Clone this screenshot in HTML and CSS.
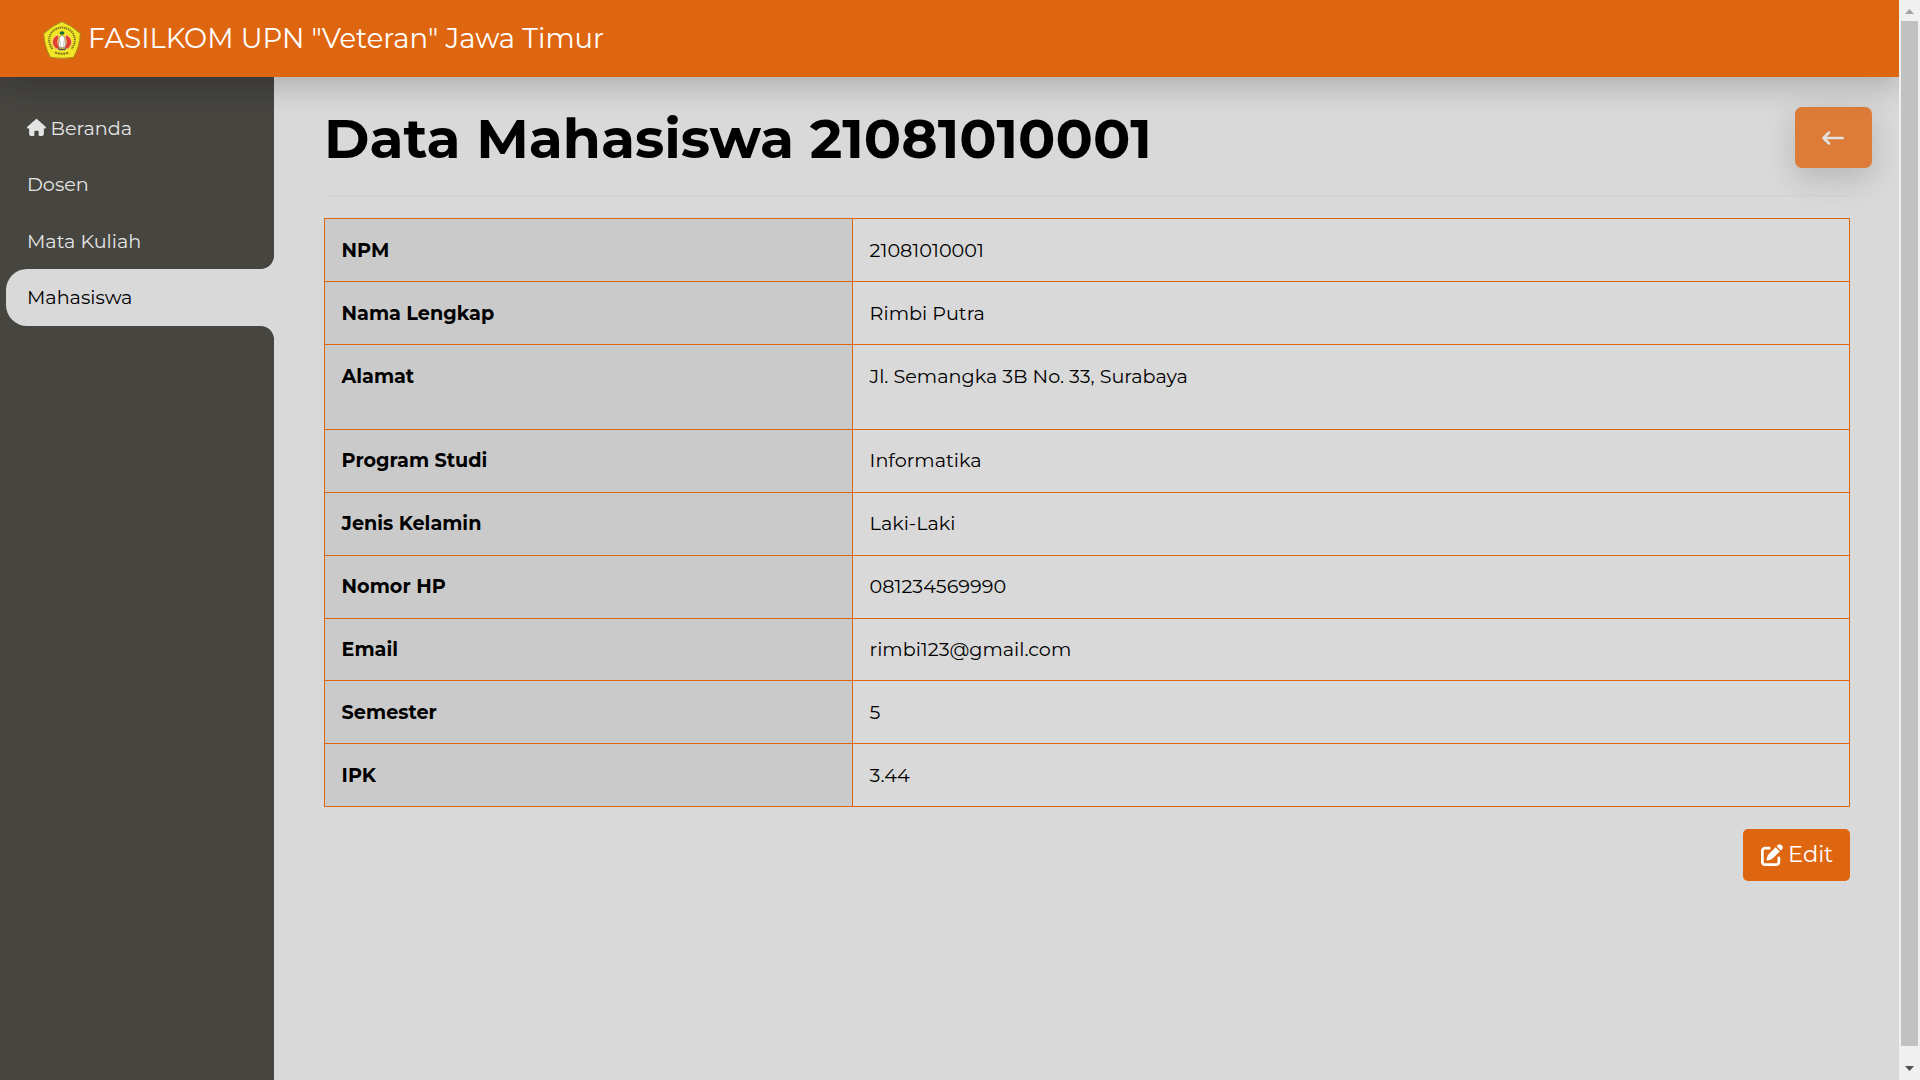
FILE: index.html
```html
<!DOCTYPE html>
<html lang="id">
<head>
<meta charset="utf-8">
<title>Data Mahasiswa</title>
<link rel="stylesheet" href="styles.css">
</head>
<body>
<div class="page">
  <header class="navbar">
    <svg class="logo" viewBox="0 0 38 38">
      <path d="M19 .7 Q28 4 37.300 12.500 Q37 25 30.500 36.500 Q19 38.200 7.500 36.500 Q1 25 .7 12.500 Q10 4 19 .7Z" fill="#f3e526" stroke="#a08a1a" stroke-width="1"/>
      <path d="M9.500 28 C2 18 8 7 19 6.500 C30 7 36 18 28.500 28" fill="none" stroke="#7d7420" stroke-width="2" stroke-dasharray="1.400 .7"/>
      <path d="M12 31.500 Q19 34 26 31.500" fill="none" stroke="#7d7420" stroke-width="2" stroke-dasharray="2 .8"/>
      <path d="M14.500 14 Q8 17 10 24 L13 28 L17 27 Q13 22 16 16Z M23.500 14 Q30 17 28 24 L25 28 L21 27 Q25 22 22 16Z" fill="#df3f2c" stroke="#f7c3a5" stroke-width=".8"/>
      <path d="M14 26.500 Q19 29 24 26.500 L22 29.300 H16Z" fill="#5c5058"/>
      <path d="M19 14 Q22.500 16 22 20 L22.500 25 Q19 28.500 15.500 25 L16 20 Q15.500 16 19 14Z" fill="#fff" stroke="#777" stroke-width=".7"/>
      <path d="M17.500 20v6M20.500 20v6" stroke="#aaa" stroke-width=".5"/>
      <ellipse cx="19" cy="12" rx="2.500" ry="1.700" fill="#176b3a"/>
    </svg>
    <span class="brand">FASILKOM UPN "Veteran" Jawa Timur</span>
  </header>
  <div class="body">
    <nav class="sidebar">
      <a class="item first"><svg class="home" viewBox="0 0 576 512"><path fill="currentColor" d="M575.800 255.500c0 18-15 32.100-32 32.100h-32l.7 160.200c0 35-25 64.200-56 64.200H392c-22 0-40-17.900-40-40V384c0-17.700-14.300-32-32-32h-64c-17.700 0-32 14.300-32 32v88c0 22.100-18 40-40 40h-64c-31 0-56-29-56-56V287.600H32c-18 0-32-14-32-32.100 0-9 3-17 10-24L266.400 8c7-7 15-8 22-8s15 2 21 7l255.400 224.500c8 7 12 15 11 24z"/></svg>Beranda</a>
      <a class="item">Dosen</a>
      <a class="item">Mata Kuliah</a>
      <a class="item active">Mahasiswa</a>
    </nav>
    <main class="content">
      <div class="heading">
        <h1>Data Mahasiswa 21081010001</h1>
        <a class="back"><svg viewBox="0 0 22 14"><path fill="none" stroke="currentColor" stroke-width="2.500" stroke-linecap="round" stroke-linejoin="round" d="M20.700 7H1.500M7 1.500 1.500 7 7 12.500"/></svg></a>
      </div>
      <table class="data">
        <tr><th>NPM</th><td>21081010001</td></tr>
        <tr><th>Nama Lengkap</th><td>Rimbi Putra</td></tr>
        <tr class="tall"><th>Alamat</th><td>Jl. Semangka 3B No. 33, Surabaya</td></tr>
        <tr class="snug"><th>Program Studi</th><td>Informatika</td></tr>
        <tr class="snug"><th>Jenis Kelamin</th><td>Laki-Laki</td></tr>
        <tr class="snug"><th>Nomor HP</th><td>081234569990</td></tr>
        <tr class="snug short"><th>Email</th><td>rimbi123@gmail.com</td></tr>
        <tr><th>Semester</th><td>5</td></tr>
        <tr><th>IPK</th><td>3.44</td></tr>
      </table>
      <a class="edit"><svg viewBox="0 0 512 512"><path fill="currentColor" d="M471.600 21.700c-21.900-21.900-57.300-21.900-79.200 0L362.300 51.700l97.900 97.900 30.100-30.100c21.900-21.900 21.900-57.300 0-79.200zm-299.200 220c-6.100 6.100-10.800 13.600-13.500 21.900l-29.600 88.800c-2.900 8.600-.6 18.100 5.800 24.600s15.900 8.700 24.600 5.800l88.800-29.600c8.200-2.700 15.700-7.400 21.900-13.500L437.700 172.300 339.700 74.300zM96 64C43 64 0 107 0 160v256c0 53 43 96 96 96h256c53 0 96-43 96-96v-96c0-17.700-14.300-32-32-32s-32 14.300-32 32v96c0 17.700-14.300 32-32 32H96c-17.700 0-32-14.300-32-32V160c0-17.700 14.300-32 32-32h96c17.700 0 32-14.300 32-32s-14.300-32-32-32z"/></svg>Edit</a>
    </main>
  </div>
</div>
<aside class="scrollbar">
  <i class="up"></i><i class="thumb"></i><i class="down"></i>
</aside>
</body>
</html>
```
FILE: styles.css
```css
* { box-sizing: border-box; }
html, body { height: 100%; margin: 0; overflow: hidden; }
body {
  display: flex;
  background: #d9d9d9;
  color: #000;
  font: 400 19.2px/28.8px Montserrat, Inter, sans-serif;
}
.page { flex: 1; display: flex; flex-direction: column; overflow: hidden; }

.navbar {
  height: 77px;
  flex: none;
  display: flex;
  align-items: center;
  padding-left: 43px;
  background: #df6611;
  color: #fff;
  box-shadow: 0 10px 30px rgba(0, 0, 0, .2);
  position: relative;
  z-index: 2;
}
.logo { width: 38px; height: 38px; margin-top: 3px; }
.brand { font-size: 27.5px; margin-left: 7px; }

.body { flex: 1; display: flex; }
.sidebar { width: 274px; flex: none; background: #464540; padding-top: 22.5px; }
.item {
  display: flex;
  align-items: center;
  height: 56.6px;
  margin-left: 6px;
  padding-left: 21px;
  color: #e4e4e4;
}
.first { padding-top: 1px; }
.home { width: 19px; height: 17px; margin-right: 4.5px; margin-top: -2px; }
.active {
  position: relative;
  background: #d9d9d9;
  color: #000;
  border-radius: 21px 0 0 21px;
}
.active::before, .active::after {
  content: "";
  position: absolute;
  right: 0;
  width: 13px;
  height: 13px;
}
.active::before { bottom: 100%; background: radial-gradient(circle at 0 0, #464540 12.500px, #d9d9d9 13.200px); }
.active::after { top: 100%; background: radial-gradient(circle at 0 100%, #464540 12.500px, #d9d9d9 13.200px); }

.content { flex: 1; padding: 0 49px 0 50px; }
.heading {
  display: flex;
  justify-content: space-between;
  align-items: flex-start;
  height: 119px;
  border-bottom: 1px solid #d1d1d1;
  padding-top: 30px;
}
h1 { margin: -1px 0 0; font-size: 55.15px; line-height: 66px; font-weight: 700; }
.back {
  width: 77px;
  height: 61px;
  margin-right: -22px;
  display: flex;
  align-items: center;
  justify-content: center;
  padding-right: 1px;
  border-radius: 7px;
  background: #df6611;
  color: #e4e4e4;
  opacity: .8;
  box-shadow: 0 10px 30px rgba(0, 0, 0, .2);
}
.back svg { width: 22px; height: 14px; }

.data { width: 1526px; margin-top: 22px; border-collapse: collapse; table-layout: fixed; }
.data th, .data td { border: 1px solid #df6611; padding: 17px 17px 0 16.6px; vertical-align: top; text-align: left; }
.data .snug th, .data .snug td { padding-top: 16px; }
.data tr { height: 63px; }
.data .tall { height: 85px; }
.data .short { height: 62px; }
.data th { width: 528px; background: #cacaca; font-weight: 700; }

.edit {
  display: flex;
  align-items: center;
  width: 107px;
  height: 52px;
  margin: 22px 0 0 auto;
  padding: 0 0 1px 18px;
  border-radius: 5px;
  background: #df6611;
  color: #fff;
  font-size: 22.5px;
}
.edit svg { width: 22px; height: 22px; margin-right: 5px; }

.scrollbar {
  width: 21px;
  flex: none;
  display: flex;
  flex-direction: column;
  align-items: center;
  background: #f0f0f0;
}
.up, .down { width: 9px; height: 5px; margin: 9px 0 7px; background: #a3a3a3; clip-path: polygon(50% 0, 100% 100%, 0 100%); }
.down { background: #505050; margin: 20px 0 9px; clip-path: polygon(0 0, 100% 0, 50% 100%); }
.thumb { flex: 1; width: 17px; background: #c1c1c1; }
```
